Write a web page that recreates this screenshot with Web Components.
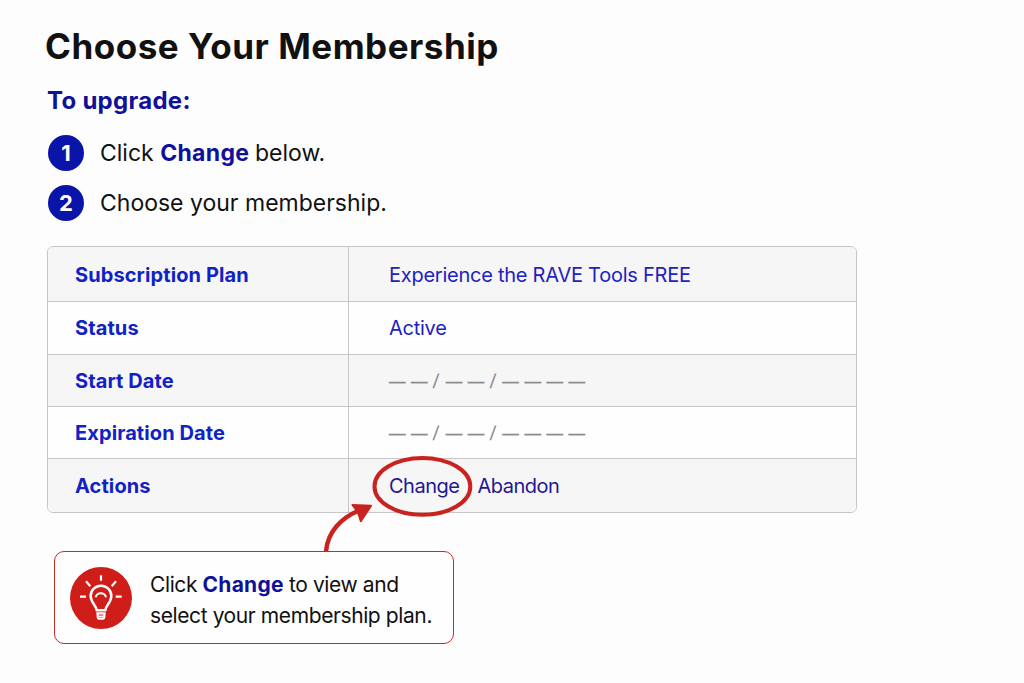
<!DOCTYPE html>
<html lang="en">
<head>
<meta charset="utf-8">
<title>Choose Your Membership</title>
<style>
  body {
    margin: 0;
    background: #fdfdfd;
    color: #111;
    font-family: Inter, "Liberation Sans", sans-serif;
  }
</style>
</head>
<body>
<membership-page>
  <page-title>Choose Your Membership</page-title>
  <section-title>To upgrade:</section-title>
  <step-item number="1">Click <key-word>Change</key-word> below.</step-item>
  <step-item number="2">Choose your membership.</step-item>
  <plan-table slot="table">
    <plan-row style="--h: 55px; --drop: 2px" label="Subscription Plan" shaded>Experience the RAVE Tools FREE</plan-row>
    <plan-row style="--h: 53px" label="Status">Active</plan-row>
    <plan-row style="--h: 52px" label="Start Date" shaded><blank-date></blank-date></plan-row>
    <plan-row style="--h: 52px" label="Expiration Date"><blank-date></blank-date></plan-row>
    <plan-row style="--h: 53px" label="Actions" shaded><action-links></action-links></plan-row>
  </plan-table>
  <hint-box slot="hint">Click <key-word>Change</key-word> to view and<br>select your membership plan.</hint-box>
</membership-page>

<script>
function define(name, html, setup) {
  customElements.define(name, class extends HTMLElement {
    constructor() {
      super();
      this.attachShadow({ mode: 'open' });
    }

    connectedCallback() {
      this.shadowRoot.innerHTML = html;
      if (setup) setup(this, this.shadowRoot);
    }
  });
}

define('membership-page', `
  <style>
    :host { display: block; box-sizing: border-box; height: 683px; padding: 22px 0 0 47px; overflow: hidden; }
    .table { padding-top: 18px; }
    .hint { padding: 38px 0 0 7px; }
  </style>
  <slot></slot>
  <div class="table"><slot name="table"></slot></div>
  <div class="hint"><slot name="hint"></slot></div>
`);

define('page-title', `
  <style>
    :host { display: block; }
    h1 { margin: 0 0 0 -2px; font-size: 35px; line-height: 48px; font-weight: 700; letter-spacing: 0.52px; white-space: nowrap; color: #111; }
  </style>
  <h1><slot></slot></h1>
`);

define('section-title', `
  <style>
    :host { display: block; }
    h2 { margin: 14px 0 10px 0; font-size: 24px; line-height: 34px; font-weight: 700; letter-spacing: 0.28px; white-space: nowrap; color: #10109a; }
  </style>
  <h2><slot></slot></h2>
`);

define('step-item', `
  <style>
    :host { display: flex; align-items: center; height: 50px; gap: 16px; font-size: 23px; line-height: 30px; white-space: nowrap; --bold-spacing: 0.3px; }
    .number { display: grid; place-items: center; width: 36px; height: 36px; margin-left: 1px; border-radius: 50%; background: #0a14a8; color: #fff; font-size: 22px; font-weight: 700; }
  </style>
  <span class="number"></span>
  <span class="text"><slot></slot></span>
`, (host, root) => {
  root.querySelector('.number').textContent = host.getAttribute('number');
});

define('key-word', `
  <style>
    :host { font-weight: 700; color: #10109a; letter-spacing: var(--bold-spacing, 0); }
  </style>
  <slot></slot>
`);

define('plan-table', `
  <style>
    :host { display: block; box-sizing: border-box; width: 809.5px; border: 1px solid #c6c6c6; border-radius: 6px; background: #fefefe; }
  </style>
  <slot></slot>
`);

define('plan-row', `
  <style>
    :host { display: grid; grid-template-columns: 299.5px 1fr; box-sizing: border-box; height: var(--h); border-bottom: 1px solid #c6c6c6; font-size: 20px; white-space: nowrap; }
    :host([shaded]) { background: #f6f6f7; }
    :host(:first-child) { border-radius: 5px 5px 0 0; }
    :host(:last-child) { border-bottom: 0; border-radius: 0 0 5px 5px; }
    div { display: flex; align-items: center; padding-top: var(--drop, 0); }
    .label { padding-left: 27px; font-weight: 700; letter-spacing: 0.1px; color: #1122c4; }
    .value { padding-left: 40.5px; border-left: 1px solid #c6c6c6; letter-spacing: -0.25px; color: #1d22c0; }
  </style>
  <div class="label"></div>
  <div class="value"><slot></slot></div>
`, (host, root) => {
  root.querySelector('.label').textContent = host.getAttribute('label');
});

define('blank-date', `
  <style>
    :host { display: block; font-family: "Liberation Sans", Arial, sans-serif; font-size: 16.5px; line-height: 24px; letter-spacing: 5.55px; color: #8c8c8c; -webkit-text-stroke: 0.4px #8c8c8c; }
    i { display: inline-block; font-style: normal; font-size: 20px; line-height: 1; letter-spacing: 7px; transform: translateY(1px) skewX(-5deg); -webkit-text-stroke: 0; }
  </style>
  ——<i>/</i>——<i>/</i>————
`);

define('action-links', `
  <style>
    :host { display: flex; gap: 18px; letter-spacing: -0.5px; }
    a { color: #1f1791; }
    .change { position: relative; }
    svg { position: absolute; left: -17px; top: -20px; width: 102px; height: 64px; pointer-events: none; overflow: visible; }
  </style>
  <a class="change">Change<svg viewBox="0 0 102 64"><ellipse cx="50.4" cy="32.4" rx="47.9" ry="28.4" fill="none" stroke="#c8231f" stroke-width="4"/></svg></a>
  <a>Abandon</a>
`);

define('bulb-icon', `
  <style>
    :host { display: block; width: 62px; height: 62px; }
    svg { display: block; width: 100%; height: 100%; }
  </style>
  <svg viewBox="30 22 186 186" fill="none" stroke="#fff" stroke-width="7.5" stroke-linecap="butt" stroke-linejoin="round">
    <circle cx="123" cy="115" r="93" fill="#cf1d19" stroke="none"/>
    <path d="M123 47v16M78 65l13 15M168 65l-13 15M60 111h18M167 111h18" stroke-width="6.5"/>
    <path d="M110 152C110 137 92 130 92 109A31 31 0 0 1 154 109C154 130 136 137 136 152Z"/>
    <path d="M107 113a16 16 0 0 1 31 0" stroke-width="6"/>
    <path d="M109 161H137M113 162V171Q113 177 119 177H127Q133 177 133 171V162" stroke-width="6.5"/>
    <path d="M116 170h14" stroke-width="5"/>
  </svg>
`);

define('hint-box', `
  <style>
    :host { display: flex; position: relative; align-items: center; gap: 18px; box-sizing: border-box; width: 400px; height: 93px; padding-left: 15px; border: 1px solid #c92a28; border-radius: 10px; background: #fefefe; font-size: 21px; line-height: 31px; letter-spacing: -0.4px; white-space: nowrap; --bold-spacing: 0.25px; }
    .text { padding-top: 4px; }
    .arrow { position: absolute; left: 265px; top: -52px; width: 60px; height: 54px; overflow: visible; }
  </style>
  <bulb-icon></bulb-icon>
  <div class="text"><slot></slot></div>
  <svg class="arrow" viewBox="320 500 60 54">
    <path d="M326 551.5C327.5 532 341 518 359 510.5" fill="none" stroke="#c8231f" stroke-width="4.4"/>
    <path d="M352.5 505L371 505.8L360.8 521.2L358 512.2Z" fill="#c8231f" stroke="#c8231f" stroke-width="2" stroke-linejoin="round"/>
  </svg>
`);
</script>
</body>
</html>
